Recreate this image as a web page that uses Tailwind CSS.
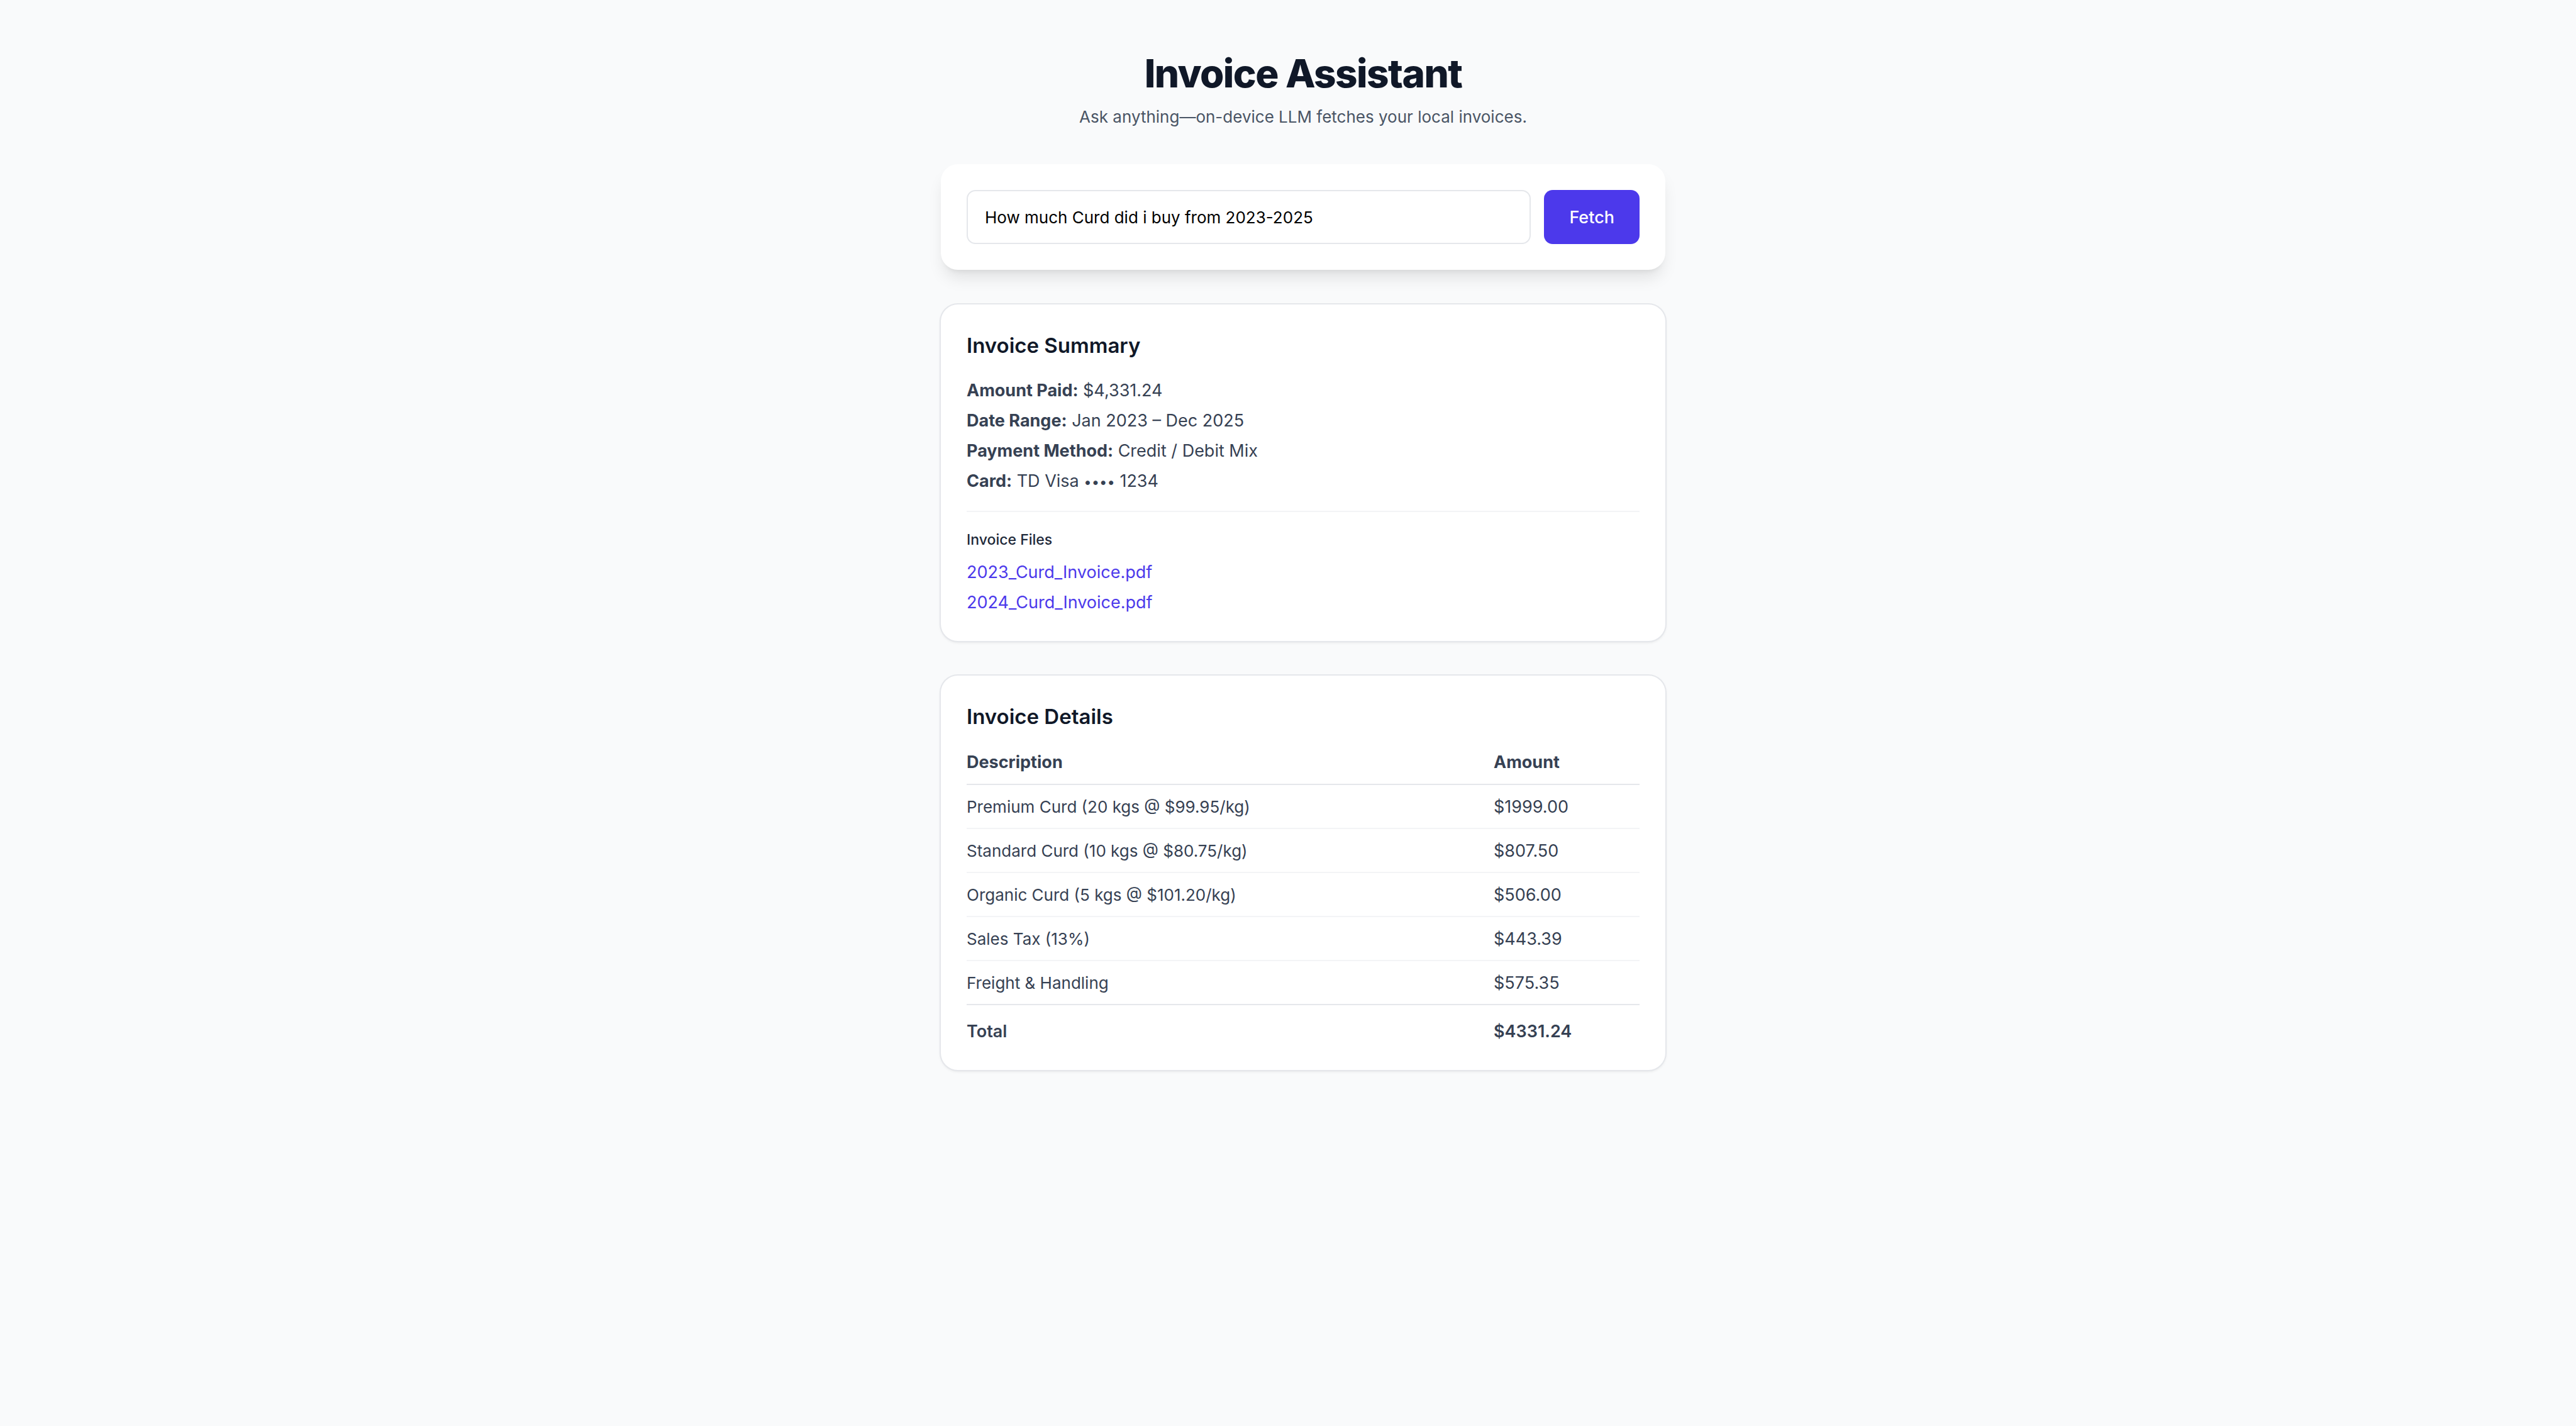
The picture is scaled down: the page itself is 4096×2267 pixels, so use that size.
<!DOCTYPE html>
<html lang="en">
<head>
<meta charset="utf-8">
<title>Invoice Assistant</title>
<script src="https://cdn.jsdelivr.net/npm/@tailwindcss/browser@4"></script>
</head>
<body class="min-h-screen bg-gray-50 pl-12 font-[Inter,sans-serif] text-[27px] leading-[41px] text-gray-700">
<main class="mx-auto flex max-w-[1152px] flex-col gap-[55px] py-[82px]">
  <header class="flex flex-col gap-[14px] text-center">
    <h1 class="text-[62px] leading-[69px] font-extrabold tracking-tight text-gray-900">Invoice Assistant</h1>
    <p class="text-[26px] text-gray-600">Ask anything—on-device LLM fetches your local invoices.</p>
  </header>

  <form class="flex gap-[21px] rounded-[27px] bg-white p-[41px] shadow-[0_17px_26px_-5px_rgb(0_0_0/0.1),0_7px_10px_-7px_rgb(0_0_0/0.1)]">
    <input type="text" aria-label="Ask about your invoices" value="How much Curd did i buy from 2023-2025" class="h-[86px] min-w-0 flex-1 rounded-[14px] border-2 border-gray-200 px-[27px] text-[26px] text-black">
    <button type="button" class="h-[86px] rounded-[14px] bg-[#4c39eb] px-[40px] font-medium text-white">Fetch</button>
  </form>

  <section class="rounded-[27px] bg-white p-[41px] shadow-[0_0_0_2px_#e5e7eb,0_2px_5px_rgb(0_0_0/0.1),0_2px_3px_-2px_rgb(0_0_0/0.1)]">
    <h2 class="mb-[27px] text-[33px] leading-[48px] font-semibold text-gray-900">Invoice Summary</h2>
    <div class="flex flex-col gap-[7px]">
      <p><strong class="font-bold">Amount Paid:</strong> $4,331.24</p>
      <p><strong class="font-bold">Date Range:</strong> Jan 2023 – Dec 2025</p>
      <p><strong class="font-bold">Payment Method:</strong> Credit / Debit Mix</p>
      <p><strong class="font-bold">Card:</strong> TD Visa <span class="text-[22px] leading-none">••••</span> 1234</p>
    </div>
    <div class="mt-[27px] border-t-2 border-gray-100 pt-[27px]">
      <h3 class="mb-[14px] text-[23px] leading-[34px] font-medium text-gray-800">Invoice Files</h3>
      <ul class="flex flex-col gap-[7px]">
        <li><a href="#" class="text-[#4c39eb]">2023_Curd_Invoice.pdf</a></li>
        <li><a href="#" class="text-[#4c39eb]">2024_Curd_Invoice.pdf</a></li>
      </ul>
    </div>
  </section>

  <section class="rounded-[27px] bg-white p-[41px] shadow-[0_0_0_2px_#e5e7eb,0_2px_5px_rgb(0_0_0/0.1),0_2px_3px_-2px_rgb(0_0_0/0.1)]">
    <h2 class="mb-[28px] text-[33px] leading-[48px] font-semibold text-gray-900">Invoice Details</h2>
    <table class="w-full table-fixed border-separate border-spacing-0 text-left">
      <thead>
        <tr>
          <th scope="col" class="w-[838px] border-b-2 border-gray-200 pb-[14px] font-bold">Description</th>
          <th scope="col" class="border-b-2 border-gray-200 pb-[14px] font-bold">Amount</th>
        </tr>
      </thead>
      <tbody>
        <tr><td class="border-b-2 border-gray-100 pt-[14px] pb-[13px] text-[26px]">Premium Curd (20 kgs @ $99.95/kg)</td><td class="border-b-2 border-gray-100 pt-[14px] pb-[13px]">$1999.00</td></tr>
        <tr><td class="border-b-2 border-gray-100 pt-[14px] pb-[13px] text-[26px]">Standard Curd (10 kgs @ $80.75/kg)</td><td class="border-b-2 border-gray-100 pt-[14px] pb-[13px]">$807.50</td></tr>
        <tr><td class="border-b-2 border-gray-100 pt-[14px] pb-[13px] text-[26px]">Organic Curd (5 kgs @ $101.20/kg)</td><td class="border-b-2 border-gray-100 pt-[14px] pb-[13px]">$506.00</td></tr>
        <tr><td class="border-b-2 border-gray-100 pt-[14px] pb-[13px] text-[26px]">Sales Tax (13%)</td><td class="border-b-2 border-gray-100 pt-[14px] pb-[13px]">$443.39</td></tr>
        <tr><td class="border-b-2 border-gray-200 pt-[14px] pb-[13px] text-[26px]">Freight &amp; Handling</td><td class="border-b-2 border-gray-200 pt-[14px] pb-[13px]">$575.35</td></tr>
      </tbody>
      <tfoot>
        <tr><th scope="row" class="pt-[21px] font-semibold">Total</th><td class="pt-[21px] font-semibold">$4331.24</td></tr>
      </tfoot>
    </table>
  </section>
</main>
</body>
</html>
